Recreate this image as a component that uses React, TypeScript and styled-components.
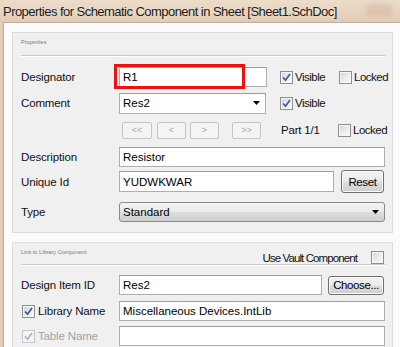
import React from 'react';
import styled, { createGlobalStyle, css } from 'styled-components';

const GlobalStyle = createGlobalStyle`
  html, body {
    margin: 0;
    padding: 0;
    background: #ffffff;
  }
  body {
    font-family: "Liberation Sans", Arial, sans-serif;
    font-size: 11.5px;
    color: #000;
  }
`;

interface CheckProps {
  checked?: boolean;
  disabled?: boolean;
}

const CheckBox: React.FC<CheckProps> = ({ checked, disabled }) => (
  <CheckBoxFrame disabled={disabled}>
    {checked && (
      <svg width="9" height="9" viewBox="0 0 9 9">
        <path
          d="M1 4.5 L3.5 7.2 L8 1"
          fill="none"
          stroke={disabled ? '#a9b3c6' : '#3b5aa0'}
          strokeWidth="1.7"
        />
      </svg>
    )}
  </CheckBoxFrame>
);

const Arrow: React.FC = () => (
  <svg width="7" height="4" viewBox="0 0 7 4">
    <path d="M0 0 H7 L3.5 4 Z" fill="#000" />
  </svg>
);

const App: React.FC = () => {
  return (
    <>
      <GlobalStyle />
      <Window>
        <TitleBar>
          <Title>Properties for Schematic Component in Sheet [Sheet1.SchDoc]</Title>
          <TitleGlow />
        </TitleBar>
        <Body>
          <Panel pb={10}>
            <PanelHeader h={22}>
              <Caption>Properties</Caption>
            </PanelHeader>
            <Separator />

            <Row h={22} mt={10}>
              <Label>Designator</Label>
              <FieldArea>
                <TextBox w={148} h={20}>
                  R1
                  <Highlight />
                </TextBox>
              </FieldArea>
              <CheckItem w={59}>
                <CheckBox checked />
                <span>Visible</span>
              </CheckItem>
              <CheckItem>
                <CheckBox />
                <span>Locked</span>
              </CheckItem>
            </Row>

            <Row h={22} mt={4}>
              <Label>Comment</Label>
              <FieldArea>
                <DropBox w={147} h={21}>
                  <span>Res2</span>
                  <Arrow />
                </DropBox>
              </FieldArea>
              <CheckItem w={59}>
                <CheckBox checked />
                <span>Visible</span>
              </CheckItem>
            </Row>

            <Row h={18} mt={7}>
              <Label />
              <FieldArea>
                <NavGroup>
                  <NavButton w={30}>&lt;&lt;</NavButton>
                  <NavButton w={29} ml={5}>&lt;</NavButton>
                  <NavButton w={29} ml={4}>&gt;</NavButton>
                  <NavButton w={29} ml={13}>&gt;&gt;</NavButton>
                </NavGroup>
              </FieldArea>
              <PartText>Part 1/1</PartText>
              <CheckItem>
                <CheckBox />
                <span>Locked</span>
              </CheckItem>
            </Row>

            <Row h={20} mt={8}>
              <Label>Description</Label>
              <TextBox h={20} grow>Resistor</TextBox>
            </Row>

            <Row h={23} mt={3}>
              <Label>Unique Id</Label>
              <TextBox w={215} h={21}>YUDWKWAR</TextBox>
              <PushButton w={43} h={23} ml={7}>Reset</PushButton>
            </Row>

            <Row h={21} mt={8}>
              <Label>Type</Label>
              <ComboButton>
                <span>Standard</span>
                <Arrow />
              </ComboButton>
            </Row>
          </Panel>

          <Panel mt={9} pb={4}>
            <PanelHeader h={21}>
              <Caption>Link to Library Component</Caption>
              <VaultItem>
                <span>Use Vault Component</span>
                <CheckBox />
              </VaultItem>
            </PanelHeader>
            <Separator />

            <Row h={20} mt={10}>
              <Label>Design Item ID</Label>
              <TextBox w={203} h={20}>Res2</TextBox>
              <PushButton w={56} h={19} ml={6}>Choose...</PushButton>
            </Row>

            <Row h={20} mt={6}>
              <Label>
                <CheckLabel>
                  <CheckBox checked />
                  <span>Library Name</span>
                </CheckLabel>
              </Label>
              <TextBox h={20} grow>Miscellaneous Devices.IntLib</TextBox>
            </Row>

            <Row h={20} mt={5}>
              <Label>
                <CheckLabel disabled>
                  <CheckBox checked disabled />
                  <span>Table Name</span>
                </CheckLabel>
              </Label>
              <TextBox h={20} grow />
            </Row>
          </Panel>
        </Body>
      </Window>
    </>
  );
};

// Styled components
const Window = styled.div`
  width: 400px;
  height: 347px;
  overflow: hidden;
  display: flex;
  flex-direction: column;
  background: #e3cdb6;
`;

const TitleBar = styled.div`
  position: relative;
  height: 22px;
  flex-shrink: 0;
  display: flex;
  align-items: center;
  padding-left: 3px;
  background: linear-gradient(#ecdcca, #e2cbb3);
`;

const Title = styled.div`
  font-family: "Liberation Sans", Arial, sans-serif;
  font-size: 13px;
  color: #1c1c1c;
  white-space: nowrap;
  letter-spacing: -0.54px;
  text-shadow: 0 0 6px rgba(255, 255, 255, 0.6);
`;

const TitleGlow = styled.div`
  position: absolute;
  right: 8px;
  top: 4px;
  width: 26px;
  height: 12px;
  border-radius: 4px;
  background: rgba(210, 180, 160, 0.5);
  filter: blur(2px);
`;

const Body = styled.div`
  flex: 1;
  margin-left: 3px;
  border-top: 1px solid #bcae9e;
  border-left: 1px solid #bcae9e;
  background: #fbfbfb;
  padding: 9px 7px 0 8px;
`;

const Panel = styled.div<{ mt?: number; pb?: number }>`
  margin-top: ${p => p.mt ?? 0}px;
  padding: 0 7px ${p => p.pb ?? 0}px 8px;
  border: 1px solid #dcdcdc;
  background: #f0f0f0;
  display: flex;
  flex-direction: column;
`;

const PanelHeader = styled.div<{ h: number }>`
  height: ${p => p.h}px;
  display: flex;
  justify-content: space-between;
  align-items: flex-start;
`;

const Caption = styled.div`
  margin-top: 5px;
  font-size: 5.6px;
  line-height: 8px;
  color: #7a7a7a;
  white-space: nowrap;
`;

const VaultItem = styled.div`
  display: flex;
  align-items: center;
  gap: 14px;
  margin-top: 8px;
  margin-right: 1px;
  font-size: 11.5px;
  color: #111;
  letter-spacing: -0.9px;
`;

const Separator = styled.div`
  height: 1px;
  background: #c8c8c8;
  box-shadow: 0 1px 0 #ffffff;
`;

const Row = styled.div<{ h: number; mt: number }>`
  height: ${p => p.h}px;
  margin-top: ${p => p.mt}px;
  display: flex;
  align-items: center;
`;

const Label = styled.div`
  width: 98px;
  flex-shrink: 0;
  font-size: 11.5px;
  color: #111;
  white-space: nowrap;
  letter-spacing: -0.15px;
`;

const CheckLabel = styled.div<{ disabled?: boolean }>`
  display: flex;
  align-items: center;
  gap: 3px;
  margin-left: 1px;
  color: ${p => (p.disabled ? '#a3a3a3' : '#111')};
`;

const FieldArea = styled.div`
  width: 161px;
  flex-shrink: 0;
  display: flex;
  align-items: center;
`;

const fieldBox = css`
  box-sizing: border-box;
  background: #ffffff;
  border: 1px solid #abadb3;
  border-top-color: #9a9ca3;
  font-size: 11.5px;
  color: #000;
  white-space: nowrap;
  display: flex;
  align-items: center;
  padding-left: 3px;
`;

const TextBox = styled.div<{ w?: number; h: number; grow?: boolean }>`
  ${fieldBox};
  position: relative;
  height: ${p => p.h}px;
  ${p => (p.grow ? 'flex: 1;' : `width: ${p.w}px; flex-shrink: 0;`)}
`;

const Highlight = styled.div`
  position: absolute;
  left: -6px;
  top: -4px;
  width: 131px;
  height: 25px;
  box-sizing: border-box;
  border: 3px solid #ee1111;
`;

const DropBox = styled.div<{ w: number; h: number }>`
  ${fieldBox};
  width: ${p => p.w}px;
  height: ${p => p.h}px;
  justify-content: space-between;
  padding-right: 5px;
`;

const ComboButton = styled.div`
  flex: 1;
  height: 20px;
  box-sizing: border-box;
  border: 1px solid #8a8a8a;
  border-radius: 3px;
  background: linear-gradient(#f3f3f3 0%, #ebebeb 48%, #dddddd 52%, #cfcfcf 100%);
  display: flex;
  align-items: center;
  justify-content: space-between;
  padding: 0 5px 0 3px;
  font-size: 11.5px;
  color: #000;
`;

const CheckBoxFrame = styled.div<{ disabled?: boolean }>`
  width: 13px;
  height: 13px;
  box-sizing: border-box;
  flex-shrink: 0;
  border: 1px solid ${p => (p.disabled ? '#c5c5c5' : '#8e8f8f')};
  background: ${p =>
    p.disabled
      ? '#f4f4f4'
      : 'linear-gradient(135deg, #d0d3d8 0%, #eeeff1 60%, #fbfbfb 100%)'};
  box-shadow: inset 0 0 0 1px #f6f6f6;
  display: flex;
  align-items: center;
  justify-content: center;
`;

const CheckItem = styled.div<{ w?: number }>`
  ${p => (p.w ? `width: ${p.w}px;` : '')}
  flex-shrink: 0;
  display: flex;
  align-items: center;
  gap: 2px;
  font-size: 11.5px;
  color: #111;
  letter-spacing: -0.5px;
`;

const PartText = styled.div`
  width: 57px;
  flex-shrink: 0;
  padding-left: 1px;
  font-size: 11.5px;
  color: #111;
  letter-spacing: -0.2px;
`;

const NavGroup = styled.div`
  display: flex;
  align-items: center;
  margin-left: 3px;
`;

const NavButton = styled.div<{ w: number; ml?: number }>`
  width: ${p => p.w}px;
  height: 17px;
  margin-left: ${p => p.ml ?? 0}px;
  box-sizing: border-box;
  border: 1px solid #c2c4c6;
  border-radius: 2px;
  background: #f4f4f4;
  color: #a8a8a8;
  font-size: 9px;
  display: flex;
  align-items: center;
  justify-content: center;
`;

const PushButton = styled.div<{ w: number; h: number; ml: number }>`
  width: ${p => p.w}px;
  height: ${p => p.h}px;
  margin-left: ${p => p.ml}px;
  flex-shrink: 0;
  box-sizing: border-box;
  border: 1px solid #707070;
  border-radius: 3px;
  box-shadow: inset 0 0 0 1px #fcfcfc;
  background: linear-gradient(#f2f2f2 0%, #ebebeb 48%, #dddddd 52%, #cfcfcf 100%);
  font-size: 11.5px;
  color: #000;
  letter-spacing: -0.4px;
  display: flex;
  align-items: center;
  justify-content: center;
`;

export default App;
